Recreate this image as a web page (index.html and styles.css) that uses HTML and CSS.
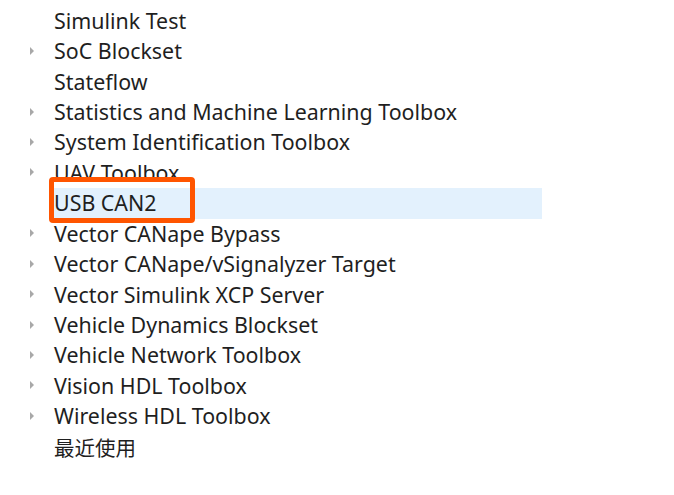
FILE: index.html
```html
<!DOCTYPE html>
<html>
<head>
<meta charset="utf-8">
<link rel="stylesheet" href="styles.css">
</head>
<body>
<div class="tree">
  <ul class="list">
    <li class="row"><span class="twisty"></span><span class="label">Simulink Test</span></li>
    <li class="row"><span class="twisty arrow"></span><span class="label">SoC Blockset</span></li>
    <li class="row"><span class="twisty"></span><span class="label">Stateflow</span></li>
    <li class="row"><span class="twisty arrow"></span><span class="label">Statistics and Machine Learning Toolbox</span></li>
    <li class="row"><span class="twisty arrow"></span><span class="label">System Identification Toolbox</span></li>
    <li class="row"><span class="twisty arrow"></span><span class="label">UAV Toolbox</span></li>
    <li class="row selected"><span class="twisty"></span><span class="label">USB CAN2</span><span class="mark"></span></li>
    <li class="row"><span class="twisty arrow"></span><span class="label">Vector CANape Bypass</span></li>
    <li class="row"><span class="twisty arrow"></span><span class="label">Vector CANape/vSignalyzer Target</span></li>
    <li class="row"><span class="twisty arrow"></span><span class="label">Vector Simulink XCP Server</span></li>
    <li class="row"><span class="twisty arrow"></span><span class="label">Vehicle Dynamics Blockset</span></li>
    <li class="row"><span class="twisty arrow"></span><span class="label">Vehicle Network Toolbox</span></li>
    <li class="row"><span class="twisty arrow"></span><span class="label">Vision HDL Toolbox</span></li>
    <li class="row"><span class="twisty arrow"></span><span class="label">Wireless HDL Toolbox</span></li>
    <li class="row"><span class="twisty"></span><span class="label cjk">最近使用</span></li>
  </ul>
</div>
</body>
</html>
```

FILE: styles.css
```css
html, body {
  margin: 0;
  padding: 0;
  background: #ffffff;
}
.tree {
  width: 674px;
}
.list {
  list-style: none;
  margin: 0;
  padding: 5.6px 0 0 0;
  width: 542px;
  font-family: "Noto Sans", "Noto Sans CJK SC", sans-serif;
  font-size: 21.4px;
  color: #1f1f1f;
}
.row {
  position: relative;
  display: flex;
  align-items: center;
  height: 30.43px;
  padding-left: 28px;
}
.row.selected {
  background: #e3f1fd;
  margin-left: 50px;
  padding-left: 0;
}
.row.selected .twisty { display: none; }
.row.selected .label { margin-left: 4px; }
.twisty {
  width: 26px;
  height: 30px;
  display: flex;
  align-items: center;
  flex: none;
}
.twisty.arrow::before {
  content: "";
  display: block;
  margin-left: 2px;
  margin-top: -1px;
  width: 0;
  height: 0;
  border-top: 4px solid transparent;
  border-bottom: 4px solid transparent;
  border-left: 4px solid #a8a8a8;
}
.label {
  white-space: nowrap;
  line-height: 30px;
}
.cjk {
  font-family: "Noto Sans CJK SC", sans-serif;
  font-size: 20.5px;
}
.mark {
  position: absolute;
  left: -1px;
  top: -11px;
  width: 136px;
  height: 36px;
  border: 5px solid #ff5500;
  border-radius: 4px;
}
```
